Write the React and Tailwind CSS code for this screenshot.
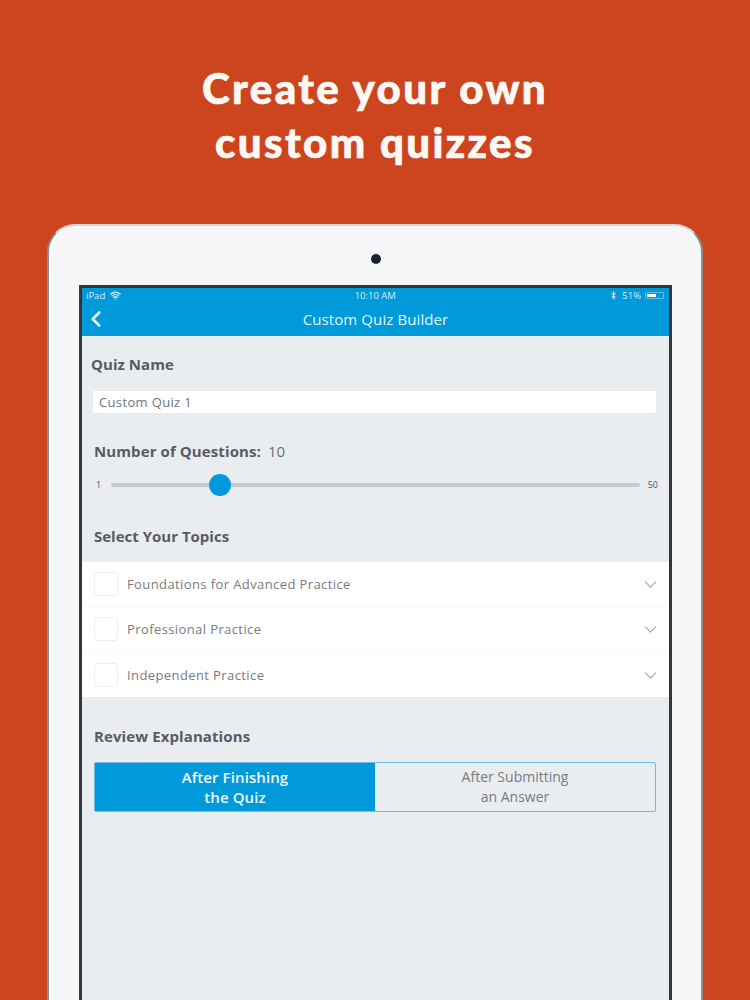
import React from 'react'
import { ChevronDown, ChevronLeft, Wifi, Bluetooth } from 'lucide-react'

const topics = ['Foundations for Advanced Practice', 'Professional Practice', 'Independent Practice']

const App = () => {
    return (
        <div className="h-[1000px] w-[750px] overflow-hidden bg-[#cc451f] font-['Open_Sans',sans-serif]">
            <h1 className="pt-[61px] text-center font-['Lato',sans-serif] text-[42px] leading-[54px] font-black tracking-[2.4px] text-[#fdf8f4] [-webkit-text-stroke:0.7px_#fdf8f4]">
                Create your own
                <br />
                custom quizzes
            </h1>

            <div className="mx-[47px] mt-[55px] h-[800px] rounded-t-[28px] border-x-2 border-t-2 border-x-[#8d8d8d] border-t-[#d9d6d0] bg-[#f4f6f8] px-[30px]">
                <div className="flex h-[59px] items-center justify-center pt-[7px] pl-[2px]">
                    <div className="size-[10px] rounded-full bg-[#1b2130]" />
                </div>

                <div className="h-[720px] w-[593px] border-x-[3px] border-t-[3px] border-[#33363a] bg-[#eaedf0]">
                    <div className="bg-[#0099d9] text-white">
                        <div className="flex h-[15px] items-center justify-between px-[4px] text-[9.5px] leading-none text-[#d5eef9]">
                            <div className="flex items-center gap-[5px]">
                                <span>iPad</span>
                                <Wifi size={11} strokeWidth={3} />
                            </div>
                            <span className="pl-[20px]">10:10 AM</span>
                            <div className="flex items-center gap-[4px] pr-[1px]">
                                <Bluetooth size={9} strokeWidth={2.5} />
                                <span>51%</span>
                                <div className="flex h-[7px] w-[19px] items-center rounded-[1px] border border-[#5fbde6] p-px">
                                    <div className="h-full w-[9px] bg-white" />
                                </div>
                            </div>
                        </div>
                        <div className="relative flex h-[33px] items-center justify-center text-[15px] tracking-[0.1px] text-[#e6f6fd]">
                            <ChevronLeft size={26} strokeWidth={2.5} className="absolute left-[1px] top-[3px]" />
                            Custom Quiz Builder
                        </div>
                    </div>

                    <div className="pt-[18px]">
                        <div className="pl-[9px] text-[15px] leading-[20px] font-bold tracking-[0.05px] text-[#565c64]">Quiz Name</div>

                        <div className="mt-[17px] mr-[13px] ml-[11px] h-[22px] rounded-[2px] bg-white pl-[6px] text-[13px] leading-[22px] tracking-[0.35px] text-[#6f7479]">
                            Custom Quiz 1
                        </div>

                        <div className="mt-[28px] flex items-baseline pl-[12px] text-[15px] leading-[20px] text-[#565c64]">
                            <span className="font-bold tracking-[0.1px]">Number of Questions:</span>
                            <span className="ml-[7px] text-[#6a6f75]">10</span>
                        </div>

                        <div className="mt-[13px] mr-[11px] ml-[14px] flex h-[22px] items-center text-[9px] text-[#50565e]">
                            <span className="w-[15px]">1</span>
                            <div className="relative h-[4px] flex-1 rounded-full bg-[#c6c9cc]">
                                <div className="absolute top-[-9px] left-[98px] size-[22px] rounded-full bg-[#0099d9]" />
                            </div>
                            <span className="ml-[8px]">50</span>
                        </div>

                        <div className="mt-[30px] pl-[12px] text-[15px] leading-[20px] font-bold text-[#565c64]">Select Your Topics</div>

                        <div className="mt-[16px] bg-white">
                            {topics.map((topic, i) => (
                                <div key={topic} className={`flex h-[45px] items-center pr-[8px] pl-[12px] ${i < 2 ? 'border-b border-[#f7f8f9]' : ''}`}>
                                    <div className="size-[24px] rounded-[3px] border border-[#eceeef] bg-white" />
                                    <span className="mt-[2px] ml-[9px] flex-1 text-[13px] tracking-[0.4px] text-[#777b80]">{topic}</span>
                                    <ChevronDown size={21} strokeWidth={1.5} className="mt-[1px] text-[#a9abad]" />
                                </div>
                            ))}
                        </div>

                        <div className="mt-[29px] pl-[12px] text-[15px] leading-[20px] font-bold tracking-[0.1px] text-[#565c64]">Review Explanations</div>

                        <div className="mt-[16px] mr-[13px] ml-[12px] flex h-[50px] rounded-[2px] border border-[#6cbde6] text-center text-[15px] leading-[20px]">
                            <div className="flex flex-1 items-center justify-center bg-[#0099d9] font-semibold tracking-[0.1px] text-[#f0faff]">
                                After Finishing
                                <br />
                                the Quiz
                            </div>
                            <div className="flex flex-1 items-center justify-center text-[14px] text-[#777b80]">
                                After Submitting
                                <br />
                                an Answer
                            </div>
                        </div>
                    </div>
                </div>
            </div>
        </div>
    )
}

export default App
